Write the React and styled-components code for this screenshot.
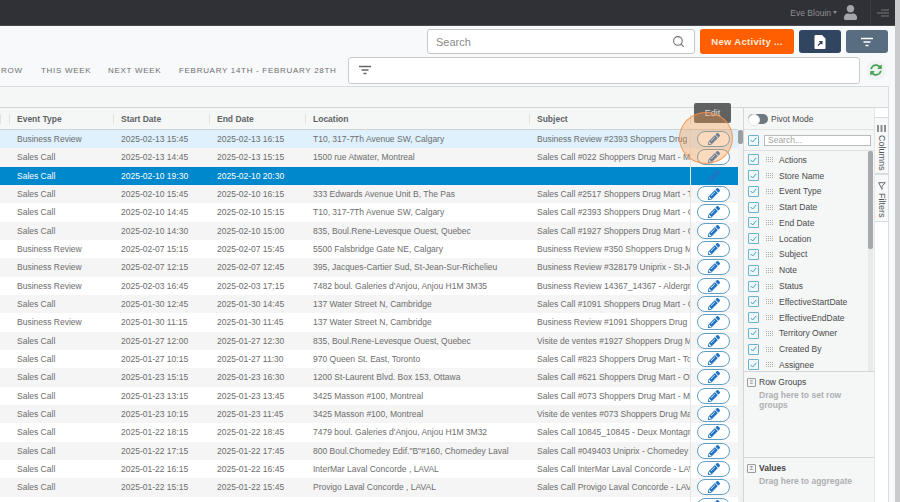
import styled, { createGlobalStyle } from 'styled-components';
import { FaPencilAlt, FaSyncAlt, FaUser } from 'react-icons/fa';
import { Search as SearchGlyph } from 'lucide-react';

const GlobalStyle = createGlobalStyle`
    html, body {
        margin: 0;
        padding: 0;
        width: 900px;
        height: 502px;
        overflow: hidden;
        background: #f7f9fa;
        font-family: "Liberation Sans", Arial, sans-serif;
    }
    * { box-sizing: border-box; }
`;

// Page frame
const Page = styled.div`
    position: relative;
    display: flex;
    width: 900px;
    height: 502px;
    overflow: hidden;
`;

const Main = styled.div`
    display: flex;
    flex-direction: column;
    width: 895px;
    height: 502px;
`;

const PageScrollbar = styled.div`
    width: 5px;
    background: #c9cbcd;
`;

// Top bar
const TopBar = styled.div`
    display: flex;
    align-items: center;
    justify-content: flex-end;
    flex: none;
    height: 26px;
    background: #303136;
    border-bottom: 1px solid #4b4c50;
    color: #8d8e91;
    font-size: 8.5px;
`;

const UserName = styled.div`
    display: flex;
    align-items: center;
    gap: 2px;
    height: 100%;
    margin-right: 6px;
`;

const Caret = styled.span`
    width: 0;
    height: 0;
    border-left: 2.5px solid transparent;
    border-right: 2.5px solid transparent;
    border-top: 3px solid #8d8e91;
`;

const UserPic = styled.div`
    display: flex;
    width: 15px;
    margin-right: 12px;
    color: #a4a5a8;
    font-size: 15px;
`;

const MenuBox = styled.div`
    display: flex;
    align-items: center;
    justify-content: center;
    width: 25px;
    height: 100%;
    border-left: 1px solid #3a3b40;
`;

// Toolbars
const SearchRow = styled.div`
    display: flex;
    justify-content: flex-end;
    align-items: center;
    flex: none;
    gap: 5px;
    height: 30px;
    padding: 2px 7px 1px 0;
`;

const SearchBox = styled.div`
    display: flex;
    align-items: center;
    justify-content: space-between;
    width: 268px;
    height: 25px;
    padding: 0 9px 0 8px;
    background: #fff;
    border: 1px solid #c4c6c8;
    border-radius: 3px;
    color: #8a8a8a;
    font-size: 11px;
`;

const NewButton = styled.div`
    display: flex;
    align-items: center;
    justify-content: center;
    width: 94px;
    height: 25px;
    background: #ff5f00;
    border-radius: 3px;
    color: #ffe9dc;
    font-size: 9.5px;
    font-weight: bold;
    letter-spacing: 0.3px;
`;

const IconButton = styled.div`
    display: flex;
    align-items: center;
    justify-content: center;
    width: 42px;
    height: 23px;
    background: ${(p) => p.$bg};
    border-radius: 3px;
`;

const FilterRow = styled.div`
    display: flex;
    align-items: center;
    flex: none;
    height: 28px;
    padding-left: 1px;
`;

const Tab = styled.div`
    flex: none;
    width: ${(p) => p.$width}px;
    color: #6e6e6e;
    font-size: 8px;
    letter-spacing: 0.7px;
    white-space: nowrap;
`;

const FilterBox = styled.div`
    display: flex;
    align-items: center;
    width: 512px;
    height: 27px;
    padding-left: 9px;
    background: #fff;
    border: 1px solid #c9cbcd;
    border-radius: 3px;
`;

const RefreshBox = styled.div`
    display: flex;
    align-items: center;
    justify-content: center;
    width: 20px;
    height: 20px;
    margin-left: 6px;
    border-radius: 50%;
    background: #f1f3f3;
    color: #4aa356;
    font-size: 12px;
`;

// Grid shell
const GridShell = styled.div`
    display: flex;
    flex-direction: column;
    flex: 1;
    min-height: 0;
    width: 889px;
    margin-top: 2px;
    background: #f5f7f7;
    border: 1px solid #d9dcde;
    border-left: none;
    border-bottom: none;
`;

const GridBand = styled.div`
    flex: none;
    height: 21px;
    border-bottom: 1px solid #d4d7d9;
`;

const GridBody = styled.div`
    display: flex;
    flex: 1;
    min-height: 0;
`;

const Table = styled.div`
    flex: none;
    width: 738px;
    overflow: hidden;
    font-size: 8.5px;
`;

const HeaderRow = styled.div`
    display: grid;
    grid-template-columns: 9px 104px 96px 96px 224px 161px 48px;
    height: 22px;
    background: #f5f7f7;
    border-bottom: 1px solid #d0d3d5;
    color: #5f6366;
    font-weight: bold;
`;

const HeaderCell = styled.div`
    display: flex;
    align-items: center;
    height: 100%;
    padding-left: 8px;
    background: linear-gradient(#dfe2e4, #dfe2e4) left center / 1px 10px no-repeat;
    white-space: nowrap;
    overflow: hidden;
`;

const Row = styled.div`
    display: grid;
    grid-template-columns: 9px 104px 96px 96px 224px 161px 48px;
    height: 18.33px;
    line-height: 18.33px;
    background: ${(p) => (p.$hover ? '#def1fd' : p.$selected ? '#0088cc' : p.$odd ? '#f5f5f5' : '#ffffff')};
    color: ${(p) => (p.$selected ? '#ffffff' : '#6d6d6d')};
`;

const Cell = styled.div`
    padding-left: 8px;
    white-space: nowrap;
    overflow: hidden;
`;

const ActionCell = styled.div`
    display: flex;
    align-items: center;
    justify-content: center;
    padding-right: 2px;
    border-left: 1px solid #e3e5e7;
`;

const EditPill = styled.div`
    display: flex;
    align-items: center;
    justify-content: center;
    width: 33px;
    height: 16px;
    background: ${(p) => (p.$selected ? 'transparent' : '#ffffff')};
    border: 1px solid ${(p) => (p.$selected ? 'transparent' : '#5f9fc4')};
    border-radius: 8px;
    color: #1f74c6;
    font-size: 12px;
`;

const TableScroll = styled.div`
    flex: none;
    width: 5px;
    margin-top: 22px;
    background: #f0f1f1;
`;

const TableThumb = styled.div`
    height: 14px;
    border-radius: 2px;
    background: #9b9fa2;
`;

// Tool panel
const ToolPanel = styled.div`
    display: flex;
    flex-direction: column;
    flex: none;
    width: 131px;
    color: #4a4a4a;
    font-size: 8.5px;
    border-left: 1px solid #d4d7d9;
`;

const PivotRow = styled.div`
    display: flex;
    align-items: center;
    flex: none;
    gap: 3px;
    height: 22px;
    padding-left: 4px;
    border-bottom: 1px solid #dfe2e4;
`;

const Toggle = styled.div`
    width: 20px;
    height: 10px;
    border-radius: 5px;
    background: #6c7a7f;
    &::before {
        content: '';
        display: block;
        width: 10px;
        height: 10px;
        border-radius: 50%;
        background: #fff;
        border: 1px solid #e4e6e7;
    }
`;

const SearchColumns = styled.div`
    display: flex;
    align-items: center;
    flex: none;
    gap: 5px;
    height: 21px;
    padding: 0 3px 0 4px;
    border-bottom: 1px solid #dfe2e4;
`;

const ColumnInput = styled.div`
    flex: 1;
    height: 11px;
    padding-left: 3px;
    line-height: 9px;
    background: #fff;
    border: 1px solid #b9bbbd;
    color: #a5a5a5;
`;

const Checkbox = styled.span`
    display: flex;
    align-items: center;
    justify-content: center;
    flex: none;
    width: 11px;
    height: 11px;
    background: #eef7fa;
    border: 1.5px solid #6db2cd;
    border-radius: 1px;
`;

const ColumnArea = styled.div`
    display: flex;
    flex: none;
    height: 221px;
    border-bottom: 1px solid #d4d7d9;
`;

const ColumnList = styled.div`
    flex: 1;
    padding-top: 1px;
    overflow: hidden;
`;

const ColumnItem = styled.div`
    display: flex;
    align-items: center;
    height: 15.78px;
    padding-left: 4px;
`;

const Grip = styled.span`
    flex: none;
    width: 7px;
    height: 7px;
    margin: 0 6px 0 7px;
    background:
        repeating-linear-gradient(0deg, #f5f7f7 0 1px, transparent 1px 2px),
        repeating-linear-gradient(90deg, #a9abad 0 1px, transparent 1px 2px);
`;

const ListScroll = styled.div`
    flex: none;
    width: 5px;
    margin-right: 1px;
    background: #e9ebeb;
`;

const ListThumb = styled.div`
    height: 98px;
    border-radius: 2px;
    background: #a6a9ab;
`;

const DropZone = styled.div`
    flex: ${(p) => (p.$grow ? 1 : 'none')};
    height: ${(p) => (p.$grow ? 'auto' : '86px')};
    padding: 5px 3px;
    border-bottom: ${(p) => (p.$grow ? 'none' : '1px solid #d4d7d9')};
`;

const ZoneTitle = styled.div`
    display: flex;
    align-items: center;
    gap: 3px;
    height: 10px;
    color: #444;
`;

const ZoneIcon = styled.span`
    display: flex;
    align-items: center;
    justify-content: center;
    width: 9px;
    height: 9px;
    border: 1px solid #9a9c9e;
    border-radius: 1px;
    color: #777;
    font-size: 6px;
`;

const ZoneHint = styled.div`
    width: 100px;
    margin: 3px 0 0 12px;
    color: #adafb1;
    font-weight: bold;
    line-height: 10px;
`;

const SideBar = styled.div`
    flex: none;
    width: 14px;
    padding-top: 9px;
    background: #fff;
    border-left: 1px solid #e4e6e7;
`;

const SideTab = styled.div`
    display: flex;
    flex-direction: column;
    align-items: center;
    height: ${(p) => p.$height}px;
    padding-top: 7px;
    background: #f7f8f8;
    border-top: 1px solid #d9dcde;
    border-bottom: 1px solid #d9dcde;
    color: #555;
    font-size: 9px;
`;

const SideLabel = styled.span`
    margin-top: 3px;
    writing-mode: vertical-rl;
    white-space: nowrap;
`;

// Overlays
const Tooltip = styled.div`
    position: absolute;
    left: 694px;
    top: 103px;
    width: 37px;
    height: 20px;
    border-radius: 2px;
    background: rgba(92, 92, 92, 0.97);
    color: #dedede;
    font-size: 9px;
    line-height: 20px;
    text-align: center;
`;

const Highlight = styled.div`
    position: absolute;
    left: 679px;
    top: 112px;
    width: 54px;
    height: 52px;
    border: 1.5px solid rgba(243, 146, 70, 0.85);
    border-radius: 50%;
    background: rgba(246, 152, 72, 0.36);
`;

const FilterLines = ({ color, width = 14 }) => (
    <svg width={width} height="10" viewBox="0 0 14 10" aria-hidden="true">
        <path d="M1 1.5h12M3.5 5h7M5.5 8.5h3" stroke={color} strokeWidth="1.4" fill="none" />
    </svg>
);

const FileIcon = () => (
    <svg width="12" height="14" viewBox="0 0 12 14" aria-hidden="true">
        <path d="M1.5 0H8l3.5 3.5V13a1 1 0 0 1-1 1h-9a1 1 0 0 1-1-1V1a1 1 0 0 1 1-1z" fill="#fff" />
        <path d="M4 10.5 7.5 7M5.2 6.6h2.7v2.7" stroke="#2f4560" strokeWidth="1.3" fill="none" />
    </svg>
);

const MenuIcon = () => (
    <svg width="12" height="8" viewBox="0 0 12 8" aria-hidden="true">
        <path d="M4 1h8M0 4h12M4 7h8" stroke="#77787b" strokeWidth="1" fill="none" />
    </svg>
);

const CheckMark = () => (
    <svg width="7" height="6" viewBox="0 0 7 6" aria-hidden="true">
        <path d="M.7 3 2.7 5 6.3.8" stroke="#4a9cc4" strokeWidth="1" fill="none" />
    </svg>
);

const COLUMN_GLYPH = (
    <svg width="9" height="7" viewBox="0 0 9 7" aria-hidden="true">
        <path d="M0 0h2v7H0zM3.5 0h2v7h-2zM7 0h2v7H7z" fill="#8d8f91" />
    </svg>
);

const FILTER_GLYPH = (
    <svg width="8" height="8" viewBox="0 0 8 8" aria-hidden="true">
        <path d="M.7.7h6.6L4 4.2v3z" fill="none" stroke="#6c6e70" strokeWidth="1" />
    </svg>
);

const rows = [
    ['Business Review', '2025-02-13 15:45', '2025-02-13 16:15', 'T10, 317-7Th Avenue SW, Calgary', 'Business Review #2393 Shoppers Drug Mart - Calgary'],
    ['Sales Call', '2025-02-13 14:45', '2025-02-13 15:15', '1500 rue Atwater, Montreal', 'Sales Call #022 Shoppers Drug Mart - Montreal'],
    ['Sales Call', '2025-02-10 19:30', '2025-02-10 20:30', '', ''],
    ['Sales Call', '2025-02-10 15:45', '2025-02-10 16:15', '333 Edwards Avenue Unit B, The Pas', 'Sales Call #2517 Shoppers Drug Mart - The Pas'],
    ['Sales Call', '2025-02-10 14:45', '2025-02-10 15:15', 'T10, 317-7Th Avenue SW, Calgary', 'Sales Call #2393 Shoppers Drug Mart - Calgary'],
    ['Sales Call', '2025-02-10 14:30', '2025-02-10 15:00', '835, Boul.Rene-Levesque Ouest, Quebec', 'Sales Call #1927 Shoppers Drug Mart - Quebec'],
    ['Business Review', '2025-02-07 15:15', '2025-02-07 15:45', '5500 Falsbridge Gate NE, Calgary', 'Business Review #350 Shoppers Drug Mart - Calgary'],
    ['Business Review', '2025-02-07 12:15', '2025-02-07 12:45', '395, Jacques-Cartier Sud, St-Jean-Sur-Richelieu', 'Business Review #328179 Uniprix - St-Jean'],
    ['Business Review', '2025-02-03 16:45', '2025-02-03 17:15', "7482 boul. Galeries d'Anjou, Anjou H1M 3M35", 'Business Review 14367_14367 - Aldergrove'],
    ['Sales Call', '2025-01-30 12:45', '2025-01-30 14:45', '137 Water Street N, Cambridge', 'Sales Call #1091 Shoppers Drug Mart - Cambridge'],
    ['Business Review', '2025-01-30 11:15', '2025-01-30 11:45', '137 Water Street N, Cambridge', 'Business Review #1091 Shoppers Drug Mart'],
    ['Sales Call', '2025-01-27 12:00', '2025-01-27 12:30', '835, Boul.Rene-Levesque Ouest, Quebec', 'Visite de ventes #1927 Shoppers Drug Mart'],
    ['Sales Call', '2025-01-27 10:15', '2025-01-27 11:30', '970 Queen St. East, Toronto', 'Sales Call #823 Shoppers Drug Mart - Toronto'],
    ['Sales Call', '2025-01-23 15:15', '2025-01-23 16:30', '1200 St-Laurent Blvd. Box 153, Ottawa', 'Sales Call #621 Shoppers Drug Mart - Ottawa'],
    ['Sales Call', '2025-01-23 13:15', '2025-01-23 13:45', '3425 Masson #100, Montreal', 'Sales Call #073 Shoppers Drug Mart - Montreal'],
    ['Sales Call', '2025-01-23 10:15', '2025-01-23 11:45', '3425 Masson #100, Montreal', 'Visite de ventes #073 Shoppers Drug Mart'],
    ['Sales Call', '2025-01-22 18:15', '2025-01-22 18:45', "7479 boul. Galeries d'Anjou, Anjou H1M 3M32", 'Sales Call 10845_10845 - Deux Montagnes'],
    ['Sales Call', '2025-01-22 17:15', '2025-01-22 17:45', '800 Boul.Chomedey Edif."B"#160, Chomedey Laval', 'Sales Call #049403 Uniprix - Chomedey Laval'],
    ['Sales Call', '2025-01-22 16:15', '2025-01-22 16:45', 'InterMar Laval Concorde , LAVAL', 'Sales Call InterMar Laval Concorde - LAVAL'],
    ['Sales Call', '2025-01-22 15:15', '2025-01-22 15:45', 'Provigo Laval Concorde , LAVAL', 'Sales Call Provigo Laval Concorde - LAVAL'],
    ['Sales Call', '2025-01-22 14:15', '2025-01-22 14:45', '1500 rue Masson, Montreal', 'Sales Call #333 Shoppers Drug Mart - Montreal'],
];

const columns = [
    'Actions', 'Store Name', 'Event Type', 'Start Date', 'End Date', 'Location', 'Subject', 'Note', 'Status',
    'EffectiveStartDate', 'EffectiveEndDate', 'Territory Owner', 'Created By', 'Assignee',
];

const tabs = [
    ['ROW', 40],
    ['THIS WEEK', 67],
    ['NEXT WEEK', 71],
    ['FEBRUARY 14TH - FEBRUARY 28TH', 169],
];

function App() {
    return (
        <Page>
            <GlobalStyle />
            <Main>
                <TopBar>
                    <UserName>Eve Blouin <Caret /></UserName>
                    <UserPic><FaUser /></UserPic>
                    <MenuBox><MenuIcon /></MenuBox>
                </TopBar>
                <SearchRow>
                    <SearchBox>
                        Search
                        <SearchGlyph size={13} color="#6e6e6e" />
                    </SearchBox>
                    <NewButton>New Activity ...</NewButton>
                    <IconButton $bg="#2f4560"><FileIcon /></IconButton>
                    <IconButton $bg="#596d80"><FilterLines color="#ffffff" /></IconButton>
                </SearchRow>
                <FilterRow>
                    {tabs.map(([label, width]) => (
                        <Tab key={label} $width={width}>{label}</Tab>
                    ))}
                    <FilterBox><FilterLines color="#666666" /></FilterBox>
                    <RefreshBox><FaSyncAlt /></RefreshBox>
                </FilterRow>
                <GridShell>
                    <GridBand />
                    <GridBody>
                        <Table>
                            <HeaderRow>
                                <HeaderCell />
                                <HeaderCell>Event Type</HeaderCell>
                                <HeaderCell>Start Date</HeaderCell>
                                <HeaderCell>End Date</HeaderCell>
                                <HeaderCell>Location</HeaderCell>
                                <HeaderCell>Subject</HeaderCell>
                                <HeaderCell>Actions</HeaderCell>
                            </HeaderRow>
                            {rows.map((row, i) => (
                                <Row key={i} $hover={i === 0} $selected={i === 2} $odd={i % 2 === 1}>
                                    <Cell />
                                    {row.map((text, j) => (
                                        <Cell key={j}>{text}</Cell>
                                    ))}
                                    <ActionCell>
                                        <EditPill $selected={i === 2}><FaPencilAlt /></EditPill>
                                    </ActionCell>
                                </Row>
                            ))}
                        </Table>
                        <TableScroll><TableThumb /></TableScroll>
                        <ToolPanel>
                            <PivotRow>
                                <Toggle />
                                Pivot Mode
                            </PivotRow>
                            <SearchColumns>
                                <Checkbox><CheckMark /></Checkbox>
                                <ColumnInput>Search...</ColumnInput>
                            </SearchColumns>
                            <ColumnArea>
                                <ColumnList>
                                    {columns.map((name) => (
                                        <ColumnItem key={name}>
                                            <Checkbox><CheckMark /></Checkbox>
                                            <Grip />
                                            {name}
                                        </ColumnItem>
                                    ))}
                                </ColumnList>
                                <ListScroll><ListThumb /></ListScroll>
                            </ColumnArea>
                            <DropZone>
                                <ZoneTitle><ZoneIcon>≡</ZoneIcon>Row Groups</ZoneTitle>
                                <ZoneHint>Drag here to set row groups</ZoneHint>
                            </DropZone>
                            <DropZone $grow>
                                <ZoneTitle><ZoneIcon>Σ</ZoneIcon><b>Values</b></ZoneTitle>
                                <ZoneHint>Drag here to aggregate</ZoneHint>
                            </DropZone>
                        </ToolPanel>
                        <SideBar>
                            <SideTab $height={57}>{COLUMN_GLYPH}<SideLabel>Columns</SideLabel></SideTab>
                            <SideTab $height={48}>{FILTER_GLYPH}<SideLabel>Filters</SideLabel></SideTab>
                        </SideBar>
                    </GridBody>
                </GridShell>
            </Main>
            <PageScrollbar />
            <Tooltip>Edit</Tooltip>
            <Highlight />
        </Page>
    );
}

export default App;
